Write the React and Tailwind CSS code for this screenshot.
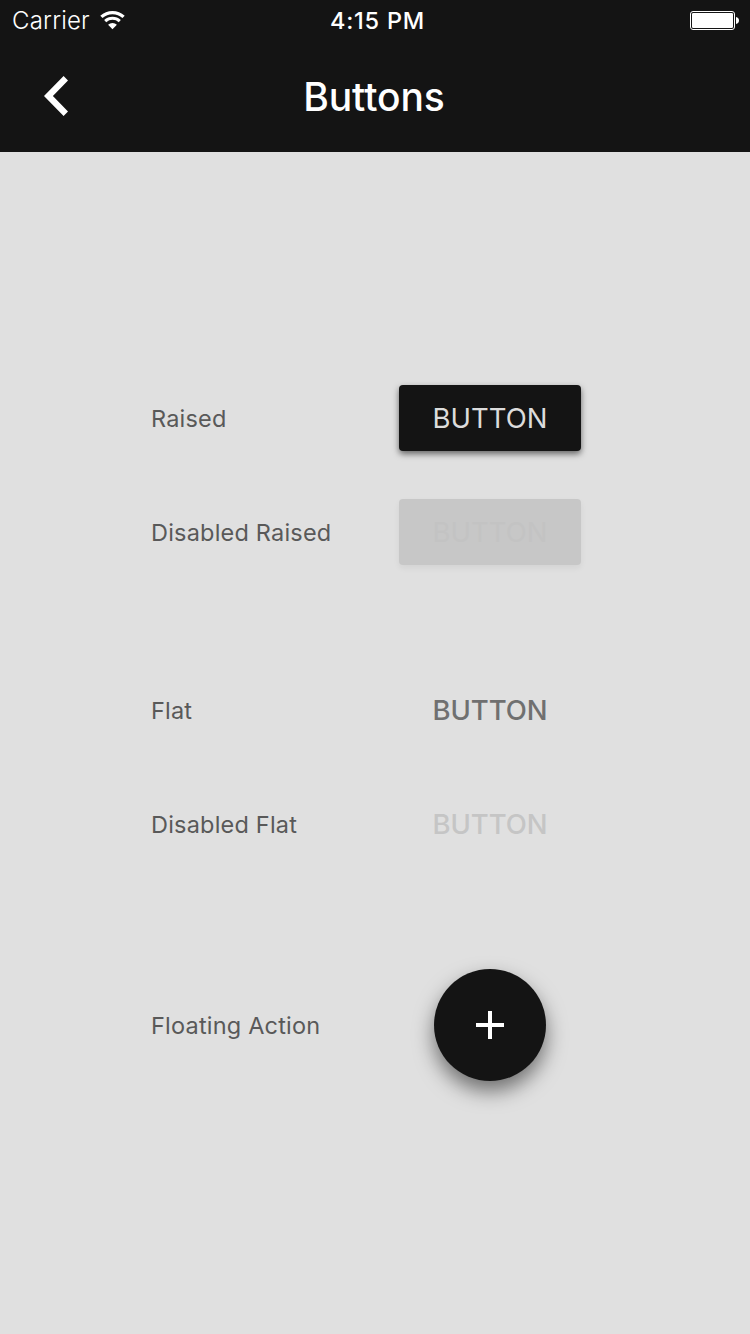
function WifiIcon() {
  return (
    <svg width="26" height="20" viewBox="0 0 26 20" fill="none" stroke="#fff">
      <path d="M1.4 6.9 A16.4 16.4 0 0 1 23.6 6.9" strokeWidth="3.3" />
      <path d="M5.2 11.1 A10.9 10.9 0 0 1 19.8 11.1" strokeWidth="3.1" />
      <path d="M12.5 19.2 L8.1 14.8 A6.2 6.2 0 0 1 16.9 14.8 Z" fill="#fff" stroke="none" />
    </svg>
  );
}

function BatteryIcon() {
  return (
    <svg width="50" height="20" viewBox="0 0 50 20">
      <rect x="0.5" y="1.5" width="44" height="18" rx="2.5" fill="none" stroke="#fff" />
      <rect x="2" y="3" width="41" height="15" rx="1.2" fill="#fff" />
      <path d="M46 7 C48 7.3 49 8.6 49 10.5 C49 12.4 48 13.7 46 14 Z" fill="#fff" />
    </svg>
  );
}

function Header() {
  return (
    <header className="h-[152px] bg-[#141414] text-white">
      <div className="grid h-10 grid-cols-3 items-center">
        <div className="flex items-center gap-[10.5px] pl-3">
          <span className="pt-0.5 text-[24px] leading-[38px] font-light tracking-[0.2px]">Carrier</span>
          <WifiIcon />
        </div>
        <span className="pt-0.5 pl-[5px] text-center text-[23.5px] leading-[38px] font-medium tracking-[0.75px] whitespace-nowrap">
          4:15 PM
        </span>
        <div className="flex justify-end pr-[10px]">
          <BatteryIcon />
        </div>
      </div>
      <div className="grid h-28 grid-cols-3 items-center">
        <button className="pl-11" aria-label="Back">
          <svg width="24" height="40" viewBox="0 0 24 40" fill="#fff">
            <path d="M19.6 0 L24 4.4 L8.9 20 L24 35.6 L19.6 40 L0 20 Z" />
          </svg>
        </button>
        <h1 className="pt-px pr-[2px] text-center text-[39px] leading-[48px] font-medium tracking-[-0.1px]">Buttons</h1>
      </div>
    </header>
  );
}

function Row({ label, className = "", children }) {
  return (
    <div className={`flex items-center ${className}`}>
      <span className="w-[248px] pt-0.5 text-[23.5px] tracking-[0.2px] whitespace-nowrap text-[#595959]">{label}</span>
      <div className="flex w-[182px] justify-center">{children}</div>
    </div>
  );
}

function Button({ className, children }) {
  return (
    <button className={`h-[66px] w-[182px] rounded-[4px] pt-0.5 text-[27.5px] ${className}`}>
      {children}
    </button>
  );
}

export default function App() {
  return (
    <div className="flex h-[1334px] w-[750px] flex-col bg-[#e0e0e0] font-['Inter',sans-serif]">
      <Header />
      <main className="flex flex-col pt-[233px] pl-[151px]">
        <Row label="Raised" className="h-[66px]">
          <Button className="bg-[#141414] text-[#dcdcdc] shadow-[0_3px_6px_rgba(0,0,0,0.55)]">BUTTON</Button>
        </Row>
        <Row label="Disabled Raised" className="mt-12 h-[66px]">
          <Button className="bg-[#c7c7c7] text-[#c3c3c3] shadow-[0_3px_6px_rgba(0,0,0,0.06)]">BUTTON</Button>
        </Row>
        <Row label="Flat" className="mt-28 h-[66px]">
          <Button className="font-medium tracking-[-0.05px] text-[#707070]">BUTTON</Button>
        </Row>
        <Row label="Disabled Flat" className="mt-12 h-[66px]">
          <Button className="font-medium tracking-[-0.05px] text-[#c5c5c5]">BUTTON</Button>
        </Row>
        <Row label="Floating Action" className="mt-28 h-28">
          <button
            className="flex size-28 items-center justify-center rounded-full bg-[#141414] shadow-[0_10px_20px_rgba(0,0,0,0.5)]"
            aria-label="Add"
          >
            <svg width="28" height="28" viewBox="0 0 28 28" fill="#fff">
              <path d="M12 0 H16 V12 H28 V16 H16 V28 H12 V16 H0 V12 H12 Z" />
            </svg>
          </button>
        </Row>
      </main>
    </div>
  );
}
